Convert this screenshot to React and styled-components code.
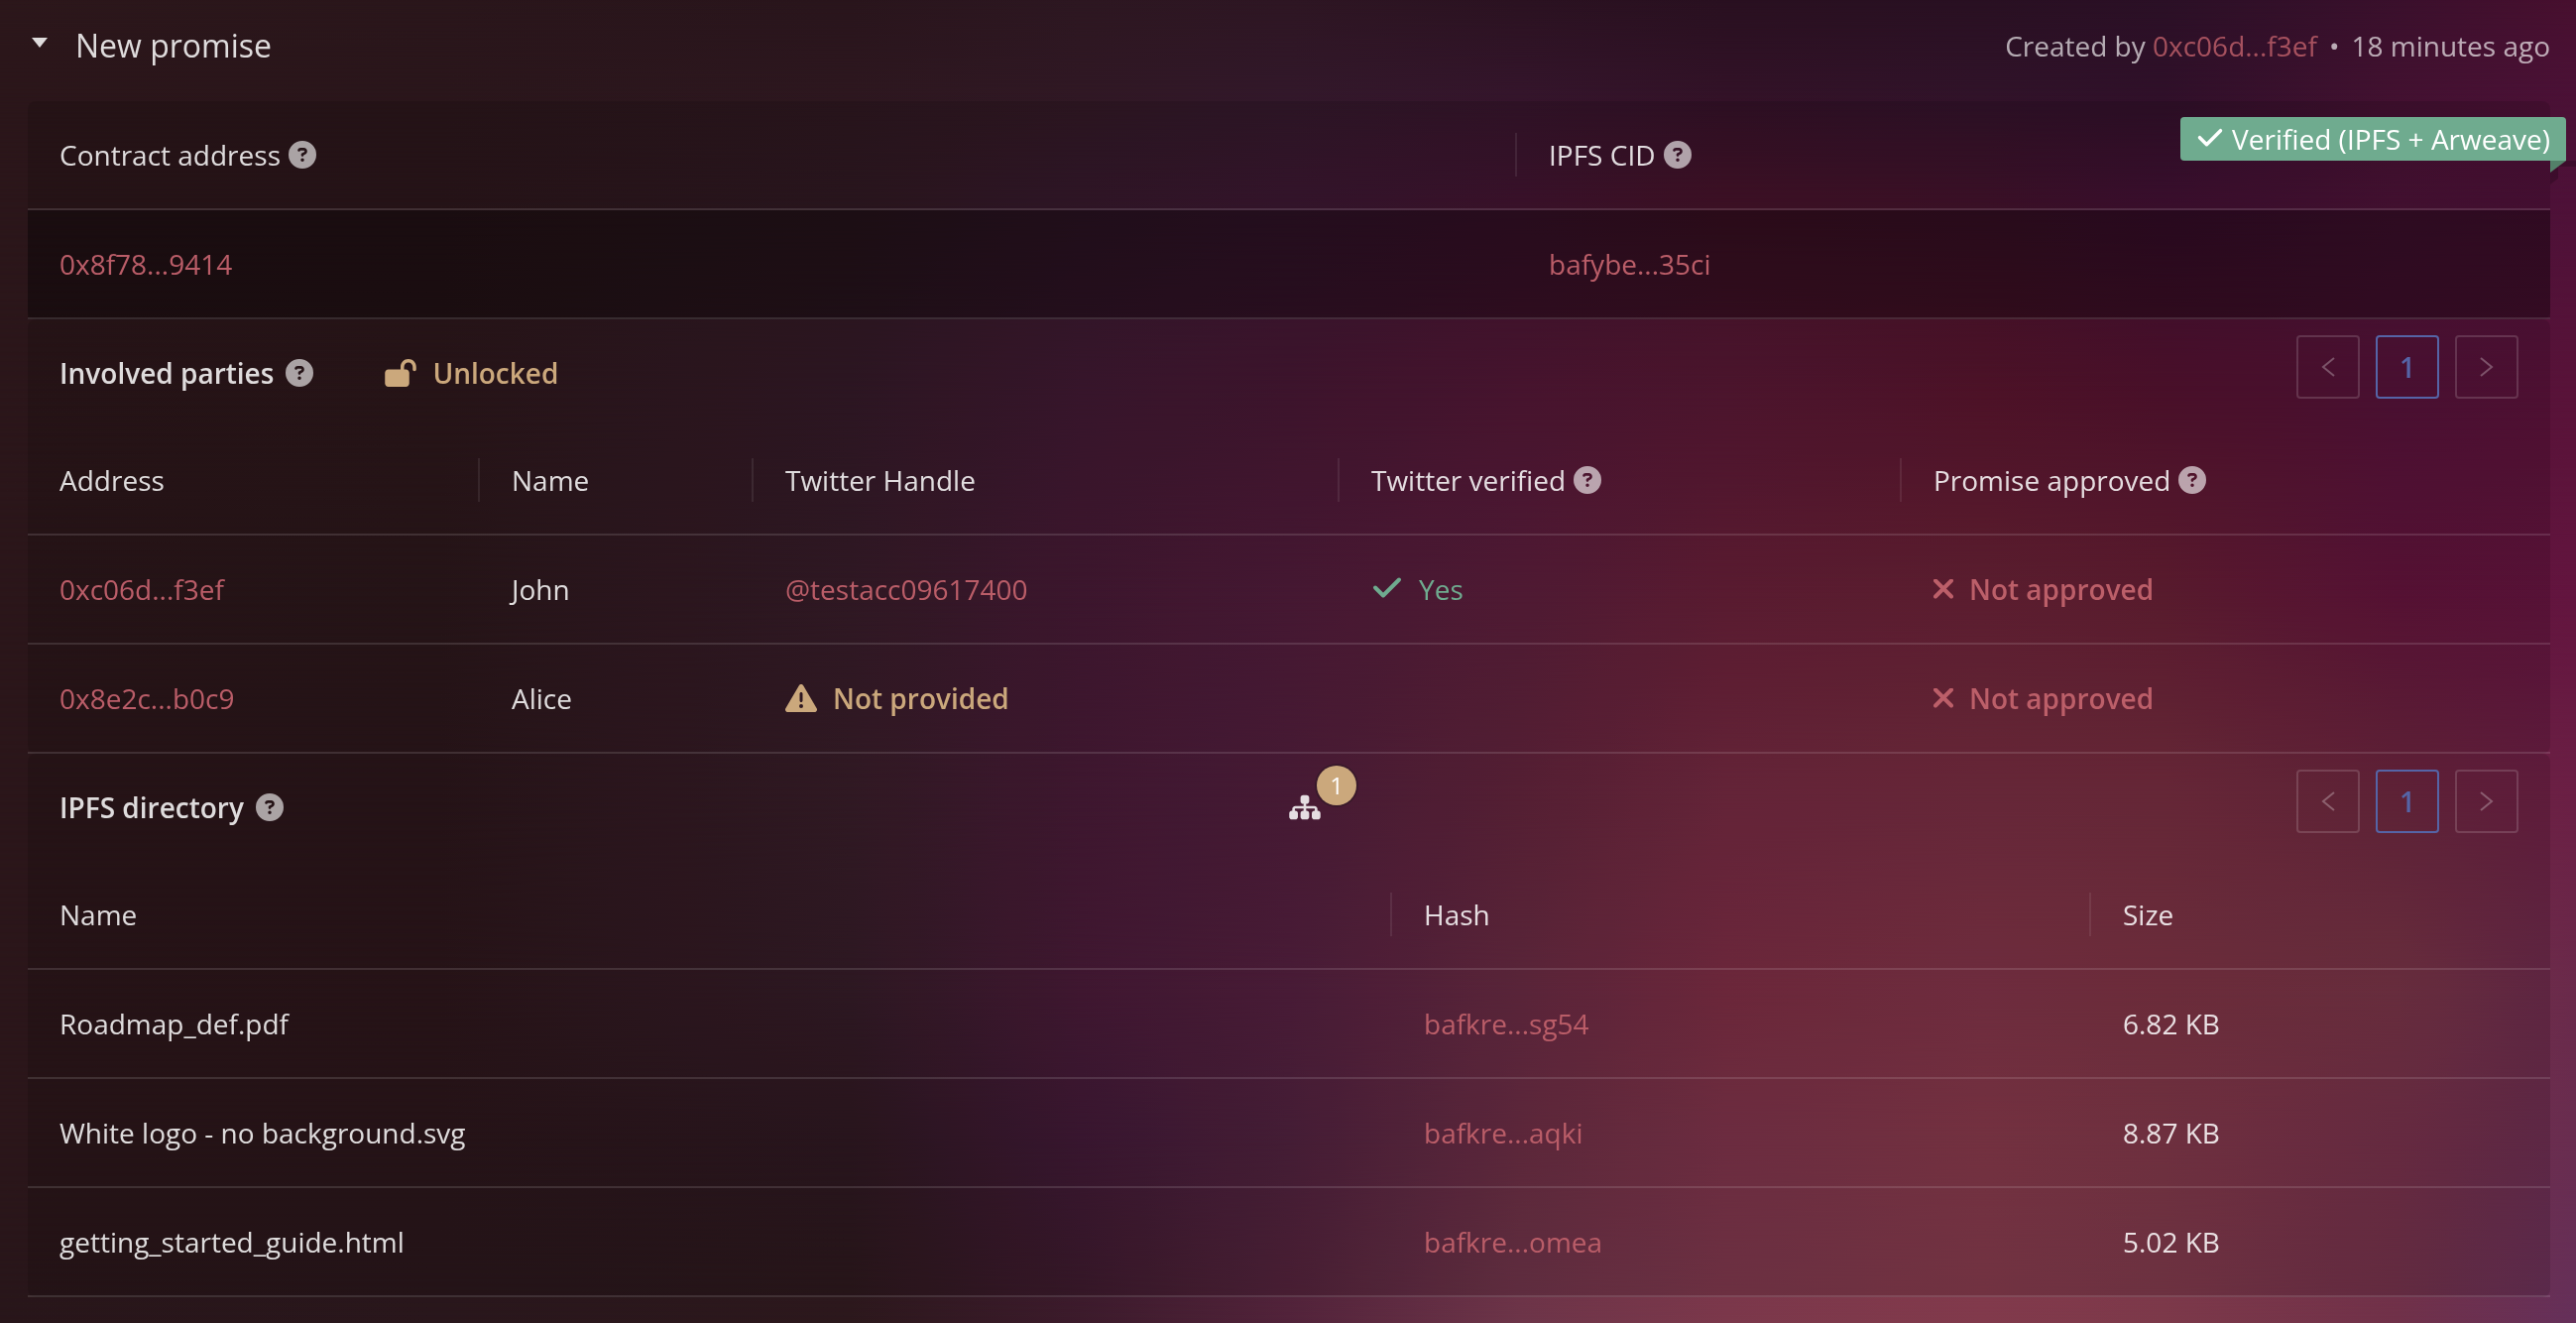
import React from "react";
import styled, { createGlobalStyle, css } from "styled-components";
import {
  FaCircleQuestion,
  FaLockOpen,
  FaSitemap,
  FaTriangleExclamation,
} from "react-icons/fa6";

const colors = {
  text: "rgba(255, 255, 255, 0.85)",
  muted: "rgba(255, 255, 255, 0.65)",
  faint: "rgba(255, 255, 255, 0.28)",
  outline: "rgba(255, 255, 255, 0.15)",
  line: "rgba(255, 255, 255, 0.12)",
  link: "#ba5d68",
  danger: "#bc5f69",
  success: "#6fab8f",
  successDark: "#538069",
  warning: "#cba87c",
  active: "#5564a6",
};

const GlobalStyle = createGlobalStyle`
  *, *::before, *::after { box-sizing: border-box; }
  html { background: #28151a; }
  body {
    margin: 0;
    color: ${colors.text};
    font-family: "Open Sans", "Noto Sans", sans-serif;
    font-size: 28px;
    line-height: 44px;
  }
  button { font: inherit; color: inherit; }
`;

/* Backdrop: horizontal gradients that blend into each other from top to bottom. */
const stops = [0, 17, 33, 42, 50, 59, 67, 77, 84, 93, 100];
const bands = [
  { at: 0, hues: ["#2c171b", "#2a161b", "#29151c", "#2d1721", "#2e1623", "#2b1221", "#291020", "#291022", "#2b1026", "#3a102c", "#48102f"] },
  { at: 7, hues: ["#2b161a", "#2a161b", "#2d171f", "#301824", "#32182a", "#34152b", "#321227", "#301329", "#2f1029", "#421130", "#4b1136"] },
  { at: 15, hues: ["#2b161a", "#2b161b", "#2e1821", "#35182b", "#3a1730", "#40142f", "#441329", "#41132c", "#401032", "#4a1336", "#4e1138"] },
  { at: 30, hues: ["#2b161a", "#2c171b", "#331a27", "#3f1931", "#461733", "#511735", "#571834", "#58152d", "#54132f", "#541338", "#591339"] },
  { at: 45, hues: ["#2b161a", "#2b171b", "#361c28", "#451a34", "#4f1c39", "#5a1e3b", "#661f37", "#682236", "#651f34", "#61143b", "#63153f"] },
  { at: 60, hues: ["#2b161a", "#2b161b", "#371d28", "#471b36", "#501e3c", "#60243b", "#722940", "#752d40", "#742d3f", "#6b273e", "#6b1f45"] },
  { at: 75, hues: ["#2b161a", "#2c161b", "#341c27", "#481b37", "#521f3e", "#662a41", "#7a2d43", "#7e3347", "#7a3343", "#763446", "#6a2a4b"] },
  { at: 86, hues: ["#2b161a", "#2b161b", "#2e1821", "#401a36", "#4e213d", "#692d43", "#7b3349", "#833849", "#7e3748", "#743049", "#692d50"] },
  { at: 100, hues: ["#28161a", "#29171c", "#2c181c", "#3c1b2b", "#52233a", "#6d3549", "#7b384b", "#813a4c", "#7c394a", "#703149", "#65305a"] },
];

const Backdrop = styled.div`
  position: fixed;
  inset: 0;
  z-index: -1;
`;

const Band = styled.div`
  position: absolute;
  inset: 0;
  background: linear-gradient(
    to right,
    ${({ $hues }) => $hues.map((hue, i) => `${hue} ${stops[i]}%`).join(", ")}
  );
  ${({ $from, $to }) =>
    $to > 0 &&
    css`
      mask-image: linear-gradient(to bottom, transparent ${$from}%, #000 ${$to}%);
    `}
`;

const Page = styled.main`
  padding: 0 26px 24px 28px;
`;

const Header = styled.header`
  display: flex;
  justify-content: space-between;
  align-items: center;
  padding: 24px 0 34px 4px;
`;

const Toggle = styled.button`
  display: flex;
  align-items: center;
  gap: 28px;
  padding: 0;
  border: 0;
  background: none;
  font-size: 32px;
  line-height: 44px;
  cursor: pointer;
`;

const Caret = styled.svg`
  width: 16px;
  height: 10px;
  margin-bottom: 6px;
  fill: currentColor;
`;

const Meta = styled.p`
  display: flex;
  gap: 12px;
  margin: 0;
  color: ${colors.muted};
`;

const Link = styled.a`
  color: ${colors.link};
  font-weight: ${({ $light }) => ($light ? 400 : 500)};
  text-decoration: none;
  opacity: ${({ $light }) => ($light ? 0.85 : 1)};
`;

const Section = styled.section`
  position: relative;
  border-radius: 8px;
  background: rgba(0, 0, 0, 0.12);
`;

const TitleBar = styled.div`
  display: grid;
  grid-template-columns: 1fr 1fr;
  align-items: start;
  padding: 0 32px;
`;

const TitleGroup = styled.div`
  display: flex;
  gap: 72px;
  padding: 32px 0;
`;

const Title = styled.h2`
  display: flex;
  align-items: center;
  gap: 12px;
  margin: 0;
  font-size: 28px;
  font-weight: 600;
  line-height: 44px;
`;

const TitleExtra = styled.div`
  display: flex;
  justify-content: space-between;
  align-items: center;
  padding: 16px 0 28px;
`;

const Table = styled.table`
  width: 100%;
  table-layout: fixed;
  border-collapse: separate;
  border-spacing: 0;
`;

const Col = styled.col`
  width: ${({ $share }) => $share}%;
`;

const cell = css`
  padding: 32px;
  border-bottom: 2px solid ${colors.line};
  text-align: left;
`;

const HeadCell = styled.th`
  ${cell}
  position: relative;
  font-weight: 500;

  &:not(:last-child)::after {
    content: "";
    position: absolute;
    top: 32px;
    right: 0;
    width: 2px;
    height: 44px;
    background: rgba(255, 255, 255, 0.08);
  }
`;

const Cell = styled.td`
  ${cell}
  background: ${({ $dim }) => ($dim ? "rgba(0, 0, 0, 0.3)" : "none")};
`;

const HeadLabel = styled.span`
  display: flex;
  align-items: center;
  gap: 8px;
`;

const HelpIcon = styled(FaCircleQuestion)`
  width: 28px;
  height: 28px;
  opacity: 0.72;
`;

const Status = styled.span`
  display: flex;
  align-items: center;
  gap: 16px;
  color: ${({ $tone }) => colors[$tone]};
  font-weight: ${({ $strong }) => ($strong ? 600 : 400)};
`;

const LockIcon = styled(FaLockOpen)`
  width: 32px;
  height: 28px;
`;

const WarningIcon = styled(FaTriangleExclamation)`
  width: 32px;
  height: 32px;
`;

const StrokeIcon = styled.svg`
  width: ${({ $size }) => $size}px;
  height: ${({ $size }) => $size}px;
  fill: none;
  stroke: currentColor;
  stroke-width: 4;
  stroke-linecap: round;
  stroke-linejoin: round;
`;

const Ribbon = styled.div`
  position: absolute;
  top: 16px;
  right: -16px;
  display: flex;
  align-items: center;
  gap: 8px;
  height: 44px;
  padding: 0 16px;
  border-radius: 4px 4px 0 4px;
  background: ${colors.success};
  color: #fff;
`;

const RibbonFold = styled.svg`
  position: absolute;
  top: 100%;
  left: calc(100% - 16px);
  width: 26px;
  height: 24px;
`;

const Tree = styled.span`
  position: relative;
  display: flex;
`;

const TreeIcon = styled(FaSitemap)`
  width: 32px;
  height: 28px;
  margin-top: 12px;
`;

const Badge = styled.span`
  position: absolute;
  top: -16px;
  left: 28px;
  width: 40px;
  height: 40px;
  border-radius: 20px;
  background: ${colors.warning};
  box-shadow: 0 0 0 2px rgba(20, 20, 20, 0.3);
  color: #fff;
  font-size: 24px;
  line-height: 40px;
  text-align: center;
`;

const Pager = styled.nav`
  display: flex;
  gap: 16px;
  margin-left: auto;
`;

const PageButton = styled.button`
  display: flex;
  align-items: center;
  justify-content: center;
  width: 64px;
  height: 64px;
  padding: 0;
  border: 2px solid ${({ $active }) => ($active ? colors.active : colors.outline)};
  border-radius: 4px;
  background: none;
  color: ${({ $active }) => ($active ? colors.active : colors.faint)};
  font-weight: 600;
`;

const Arrow = styled.svg`
  width: 14px;
  height: 20px;
  fill: none;
  stroke: currentColor;
  stroke-width: 2;
`;

function Check({ size = 32 }) {
  return (
    <StrokeIcon $size={size} viewBox="0 0 32 32" aria-hidden="true">
      <path d="M4 14.5 12 22.5 28 6.5" />
    </StrokeIcon>
  );
}

function Cross() {
  return (
    <StrokeIcon $size={20} viewBox="0 0 20 20" aria-hidden="true">
      <path d="M2 1.5 18 17.5M18 1.5 2 17.5" />
    </StrokeIcon>
  );
}

function Pagination({ label }) {
  return (
    <Pager aria-label={label}>
      <PageButton type="button" aria-label="Previous page" disabled>
        <Arrow viewBox="0 0 14 20"><path d="M13 1 2 10l11 9" /></Arrow>
      </PageButton>
      <PageButton type="button" $active aria-current="page">1</PageButton>
      <PageButton type="button" aria-label="Next page" disabled>
        <Arrow viewBox="0 0 14 20"><path d="M1 1l11 9L1 19" /></Arrow>
      </PageButton>
    </Pager>
  );
}

function DataTable({ columns, rows, dim }) {
  const total = columns.reduce((sum, column) => sum + column.width, 0);
  return (
    <Table>
      <colgroup>
        {columns.map((column) => (
          <Col key={column.title} $share={(column.width / total) * 100} />
        ))}
      </colgroup>
      <thead>
        <tr>
          {columns.map((column) => (
            <HeadCell key={column.title} scope="col">
              <HeadLabel>
                {column.title}
                {column.help && <HelpIcon aria-hidden="true" />}
              </HeadLabel>
            </HeadCell>
          ))}
        </tr>
      </thead>
      <tbody>
        {rows.map((row, r) => (
          <tr key={r}>
            {row.map((value, c) => (
              <Cell key={c} $dim={dim}>{value}</Cell>
            ))}
          </tr>
        ))}
      </tbody>
    </Table>
  );
}

const NotApproved = () => (
  <Status $tone="danger" $strong><Cross />Not approved</Status>
);

const contractColumns = [
  { title: "Contract address", width: 1502, help: true },
  { title: "IPFS CID", width: 1042, help: true },
];
const contractRows = [
  [<Link href="#contract">0x8f78...9414</Link>, <Link href="#cid">bafybe...35ci</Link>],
];

const partyColumns = [
  { title: "Address", width: 456 },
  { title: "Name", width: 276 },
  { title: "Twitter Handle", width: 591 },
  { title: "Twitter verified", width: 567, help: true },
  { title: "Promise approved", width: 654, help: true },
];
const partyRows = [
  [
    <Link href="#john">0xc06d...f3ef</Link>,
    "John",
    <Link href="#handle">@testacc09617400</Link>,
    <Status $tone="success"><Check />Yes</Status>,
    <NotApproved />,
  ],
  [
    <Link href="#alice">0x8e2c...b0c9</Link>,
    "Alice",
    <Status $tone="warning" $strong><WarningIcon aria-hidden="true" />Not provided</Status>,
    null,
    <NotApproved />,
  ],
];

const fileColumns = [
  { title: "Name", width: 1376 },
  { title: "Hash", width: 705 },
  { title: "Size", width: 463 },
];
const fileRows = [
  ["Roadmap_def.pdf", <Link href="#sg54">bafkre...sg54</Link>, "6.82 KB"],
  ["White logo - no background.svg", <Link href="#aqki">bafkre...aqki</Link>, "8.87 KB"],
  ["getting_started_guide.html", <Link href="#omea">bafkre...omea</Link>, "5.02 KB"],
];

export default function App() {
  return (
    <>
      <GlobalStyle />
      <Backdrop aria-hidden="true">
        {bands.map((band, i) => (
          <Band key={band.at} $hues={band.hues} $from={i ? bands[i - 1].at : 0} $to={band.at} />
        ))}
      </Backdrop>
      <Page>
        <Header>
          <Toggle type="button" aria-expanded="true">
            <Caret viewBox="0 0 16 10" aria-hidden="true"><path d="M0 0h16L8 10z" /></Caret>
            New promise
          </Toggle>
          <Meta>
            <span>Created by <Link href="#creator" $light>0xc06d...f3ef</Link></span>
            <span>•</span>
            <span>18 minutes ago</span>
          </Meta>
        </Header>

        <Section>
          <DataTable columns={contractColumns} rows={contractRows} dim />
          <Ribbon>
            <Check size={28} />
            Verified (IPFS + Arweave)
            <RibbonFold viewBox="0 0 26 24" aria-hidden="true">
              <path d="M16 0h10v6H8zM0 12l8-6v12l-8 6z" fill="rgba(0, 0, 0, 0.2)" />
              <path d="M0 0h16L0 12z" fill={colors.successDark} />
            </RibbonFold>
          </Ribbon>
        </Section>

        <Section>
          <TitleBar>
            <TitleGroup>
              <Title>Involved parties<HelpIcon aria-hidden="true" /></Title>
              <Status $tone="warning" $strong><LockIcon aria-hidden="true" />Unlocked</Status>
            </TitleGroup>
            <TitleExtra>
              <Pagination label="Involved parties pages" />
            </TitleExtra>
          </TitleBar>
          <DataTable columns={partyColumns} rows={partyRows} />
        </Section>

        <Section>
          <TitleBar>
            <TitleGroup>
              <Title>IPFS directory<HelpIcon aria-hidden="true" /></Title>
            </TitleGroup>
            <TitleExtra>
              <Tree>
                <TreeIcon aria-hidden="true" />
                <Badge>1</Badge>
              </Tree>
              <Pagination label="IPFS directory pages" />
            </TitleExtra>
          </TitleBar>
          <DataTable columns={fileColumns} rows={fileRows} />
        </Section>
      </Page>
    </>
  );
}
